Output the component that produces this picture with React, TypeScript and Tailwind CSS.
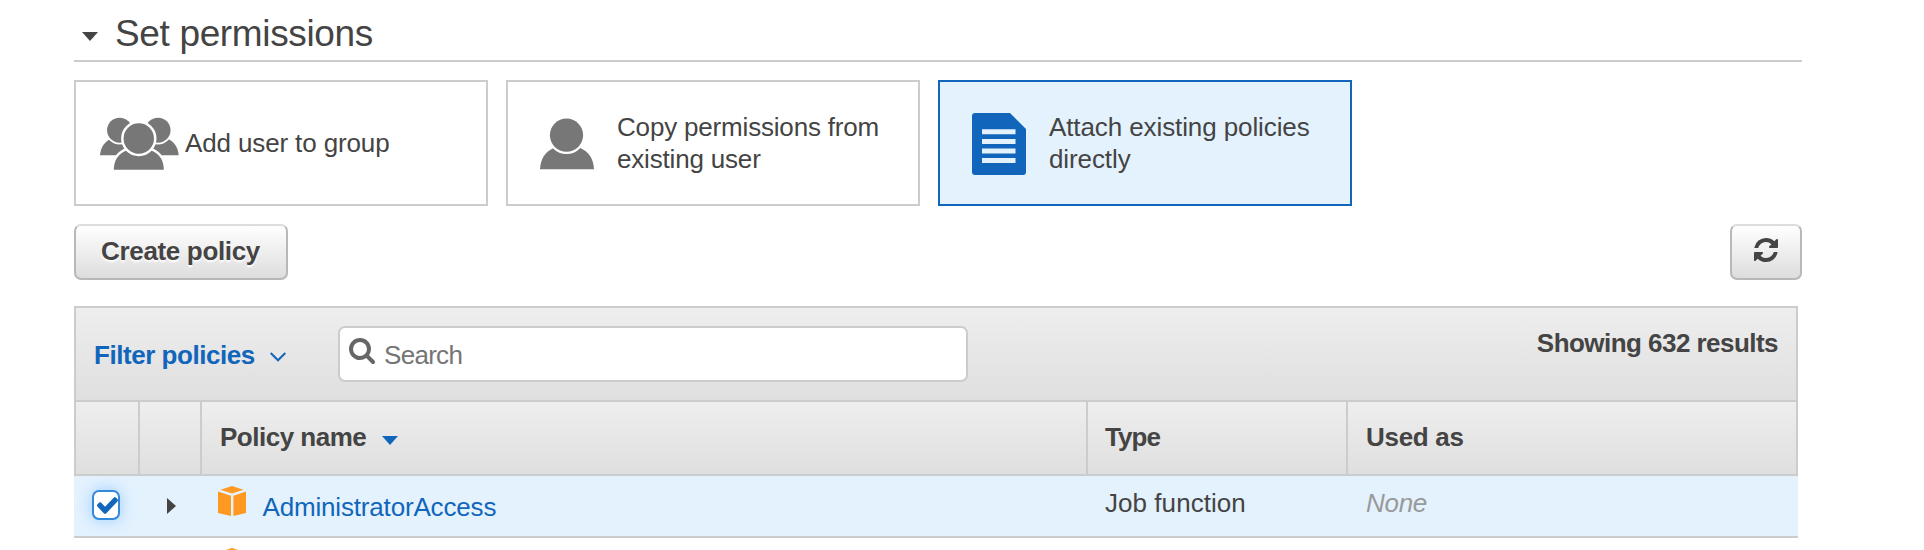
import type { ReactNode } from "react";

function GroupIcon() {
  return (
    <svg className="block h-[54px] w-20 shrink-0" viewBox="0 0 80 54" fill="#777777">
      <path d="M0 39.300C0.500 32 4 26.500 9.500 23.500H33V39.300Z" />
      <path d="M78.700 39.300C78.200 32 74.700 26.500 69.200 23.500H46V39.300Z" />
      <g stroke="#ffffff" strokeWidth="3.600" paintOrder="stroke">
        <circle cx="19.600" cy="14.200" r="12.500" />
        <circle cx="58" cy="14.200" r="12.500" />
      </g>
      <g stroke="#ffffff" strokeWidth="5" paintOrder="stroke">
        <path d="M13.800 53.800C13.800 44.500 18 38.300 26.200 34.500H51.500C59.700 38.300 63.800 44.500 63.800 53.800Z" />
        <circle cx="38.800" cy="22.500" r="15.200" />
      </g>
    </svg>
  );
}

function UserIcon() {
  return (
    <svg className="block h-[52px] w-[54px] shrink-0" viewBox="0 0 54 52" fill="#777777">
      <path d="M0 51.300C0.500 41 5 34 13.500 30H40.500C49 34 53.500 41 54 51.300Z" />
      <circle cx="26.500" cy="17.200" r="16.600" stroke="#ffffff" strokeWidth="4.600" paintOrder="stroke" />
    </svg>
  );
}

function DocumentIcon() {
  return (
    <svg className="block h-[62px] w-[54px] shrink-0" viewBox="0 0 54 62">
      <path d="M3 0H38L54 16V59Q54 62 51 62H3Q0 62 0 59V3Q0 0 3 0Z" fill="#1166bb" />
      <path d="M10 16.300H43.500V21.300H10ZM10 26H43.500V31H10ZM10 35.500H43.500V40.500H10ZM10 45H43.500V50H10Z" fill="#e4f2fe" />
    </svg>
  );
}

function SearchIcon() {
  return (
    <svg className="mt-2.5 block size-[26px] shrink-0" viewBox="0 0 1664 1664" fill="#666666">
      <path d="M1152 704q0-185-131.500-316.500t-316.500-131.500-316.500 131.500-131.500 316.500 131.500 316.500 316.500 131.500 316.500-131.500 131.500-316.500zm512 832q0 52-38 90t-90 38q-54 0-90-38l-343-342q-179 124-399 124-143 0-273.500-55.500t-225-150-150-225-55.500-273.500 55.500-273.500 150-225 225-150 273.500-55.500 273.500 55.500 225 150 150 225 55.500 273.500q0 220-124 399l343 343q37 37 37 90z" />
    </svg>
  );
}

function RefreshIcon() {
  return (
    <svg className="block size-6" viewBox="0 0 1536 1536" fill="#444444">
      <path d="M1511 928q0 5-1 7-64 268-268 434.500t-478 166.500q-146 0-282.500-55t-243.500-157l-129 129q-19 19-45 19t-45-19-19-45v-448q0-26 19-45t45-19h448q26 0 45 19t19 45-19 45l-137 137q71 66 161 102t187 36q134 0 250-65t186-179q11-17 53-117 8-23 30-23h192q13 0 22.500 9.500t9.500 22.500zm25-800v448q0 26-19 45t-45 19h-448q-26 0-45-19t-19-45 19-45l138-138q-148-137-349-137-134 0-250 65t-186 179q-11 17-53 117-8 23-30 23h-199q-13 0-22.500-9.500t-9.500-22.500v-7q65-268 270-434.500t480-166.500q146 0 284 55.500t245 156.500l130-129q19-19 45-19t45 19 19 45z" />
    </svg>
  );
}

function CheckIcon() {
  return (
    <svg className="block h-[17px] w-[21px]" viewBox="121 334 1550 1188" preserveAspectRatio="none" fill="#1166bb">
      <path d="M1671 566q0 40-28 68l-724 724-136 136q-28 28-68 28t-68-28l-136-136-362-362q-28-28-28-68t28-68l136-136q28-28 68-28t68 28l294 295 656-657q28-28 68-28t68 28l136 136q28 28 28 68z" />
    </svg>
  );
}

function PolicyIcon() {
  return (
    <svg className="block h-[30px] w-7 shrink-0" viewBox="0 0 28 30" fill="#ff9922">
      <path d="M14 0L25.500 3.800L14 7.600L2.500 3.800Z" />
      <path d="M0 5.500L13 9.800V30L0 27Z" />
      <path d="M28 5.500L15.400 9.800V30L28 27Z" />
    </svg>
  );
}

function OptionCard({ icon, lines, selected = false, className, textClass }: {
  icon: ReactNode;
  lines: { text: string; tracking: string }[];
  selected?: boolean;
  className: string;
  textClass: string;
}) {
  return (
    <button
      className={`flex h-[126px] w-[414px] border-2 text-left leading-8 ${
        selected ? "border-[#1166bb] bg-[#e4f2fe]" : "border-[#cccccc] bg-white"
      } ${className}`}
    >
      {icon}
      <span className={textClass}>
        {lines.map((line) => (
          <span key={line.text} className={`block whitespace-nowrap ${line.tracking}`}>{line.text}</span>
        ))}
      </span>
    </button>
  );
}

const buttonClass =
  "flex h-14 items-center justify-center rounded-[7px] border-2 border-[#b8b8b8] border-t-[#dcdcdc] bg-linear-to-b from-white to-[#dddddd]";

const headCell = "h-full shrink-0 border-r-2 border-[#cccccc]";

export default function App() {
  return (
    <main className="h-[550px] w-[1924px] overflow-hidden bg-white pl-[74px] font-['Liberation_Sans',Arial,sans-serif] text-[26px] text-[#444444]">
      <header className="flex h-[62px] w-[1728px] border-b-2 border-[#cccccc] pl-2">
        <svg className="mt-8 block h-[9px] w-4" viewBox="0 0 16 9" fill="#444444">
          <path d="M0 0H16L8 9Z" />
        </svg>
        <h1 className="ml-[17px] mt-[13px] text-[37px] leading-[42px] tracking-[-0.35px]">Set permissions</h1>
      </header>

      <section className="mt-[18px] flex gap-[18px]">
        <OptionCard
          className="pl-6"
          textClass="ml-[5px] mt-[45px]"
          icon={<div className="mt-[34px]"><GroupIcon /></div>}
          lines={[{ text: "Add user to group", tracking: "tracking-[-0.13px]" }]}
        />
        <OptionCard
          className="pl-8"
          textClass="ml-[23px] mt-[29px]"
          icon={<div className="mt-9"><UserIcon /></div>}
          lines={[
            { text: "Copy permissions from", tracking: "tracking-[-0.18px]" },
            { text: "existing user", tracking: "tracking-[-0.18px]" },
          ]}
        />
        <OptionCard
          selected
          className="pl-8"
          textClass="ml-[23px] mt-[29px]"
          icon={<div className="mt-[31px]"><DocumentIcon /></div>}
          lines={[
            { text: "Attach existing policies", tracking: "tracking-[-0.1px]" },
            { text: "directly", tracking: "tracking-[-0.1px]" },
          ]}
        />
      </section>

      <div className="mt-[18px] flex w-[1728px] justify-between">
        <button className={`${buttonClass} w-[214px] pb-0.5 pr-px font-bold tracking-[-0.34px] [text-shadow:0_2px_2px_#ffffff]`}>
          Create policy
        </button>
        <button className={`${buttonClass} w-[72px] pb-1`} aria-label="Refresh">
          <RefreshIcon />
        </button>
      </div>

      <section className="mt-[26px] w-[1724px]">
        <div className="flex h-24 border-2 border-[#cccccc] bg-linear-to-b from-[#eeeeee] to-[#dfdfdf] pl-[18px] pr-[18px]">
          <button className="mt-[31px] flex h-8 w-[244px] items-center font-bold text-[#1166bb]">
            <span className="w-[176px] text-left whitespace-nowrap tracking-[-0.46px]">Filter policies</span>
            <svg className="mt-1 block h-2.5 w-4" viewBox="0 0 16 10" fill="none" stroke="#1166bb" strokeWidth="2">
              <path d="M0.700 1L8 8.300L15.300 1" />
            </svg>
          </button>
          <label className="mt-[18px] flex h-14 w-[630px] rounded-[7px] border-2 border-[#cccccc] bg-white pl-[9px]">
            <SearchIcon />
            <input
              className="ml-[9px] w-[560px] bg-transparent pt-0.5 tracking-[-0.7px] text-[#757575] outline-none placeholder:text-[#757575]"
              placeholder="Search"
            />
          </label>
          <span className="ml-auto mt-[19px] h-8 leading-8 font-bold tracking-[-0.54px]">Showing 632 results</span>
        </div>

        <div className="flex h-[74px] border-x-2 border-b-2 border-[#cccccc] bg-linear-to-b from-[#eeeeee] to-[#dfdfdf] leading-[70px] font-bold">
          <div className={`${headCell} w-16`} />
          <div className={`${headCell} w-[62px]`} />
          <div className={`${headCell} flex w-[886px] pl-[18px]`}>
            <span className="w-[162px] whitespace-nowrap tracking-[-0.5px]">Policy name</span>
            <svg className="mt-[34px] block h-[9px] w-4" viewBox="0 0 16 9" fill="#1166bb">
              <path d="M0 0H16L8 9Z" />
            </svg>
          </div>
          <div className={`${headCell} w-[260px] pl-[17px] tracking-[-0.9px]`}>Type</div>
          <div className="pl-[18px] tracking-[-0.3px]">Used as</div>
        </div>

        <div className="flex h-[62px] border-b-2 border-[#cccccc] bg-[#e4f2fe]">
          <div className="w-[66px] shrink-0 pl-[18px] pt-3.5">
            <div className="flex h-[30px] w-7 items-center justify-center rounded-[7px] border-2 border-[#3388dd] bg-white pl-0.5 shadow-[0_0_16px_#99ccff]">
              <CheckIcon />
            </div>
          </div>
          <div className="w-[62px] shrink-0 pl-[27px] pt-[22px]">
            <svg className="block h-4 w-[9px]" viewBox="0 0 9 16" fill="#444444">
              <path d="M0 0V16L9 8Z" />
            </svg>
          </div>
          <div className="flex w-[886px] shrink-0 pl-4 pt-2.5">
            <PolicyIcon />
            <a className="ml-[16.5px] mt-[5px] h-8 leading-8 tracking-[-0.17px] text-[#1166bb]">AdministratorAccess</a>
          </div>
          <div className="w-[260px] shrink-0 pl-[17px] pt-[11px] leading-8 tracking-[0.05px]">Job function</div>
          <div className="pl-[18px] pt-[11px] leading-8 tracking-[-0.3px] text-[#999999] italic">None</div>
        </div>

        <div className="flex pl-36 pt-2.5">
          <PolicyIcon />
        </div>
      </section>
    </main>
  );
}
